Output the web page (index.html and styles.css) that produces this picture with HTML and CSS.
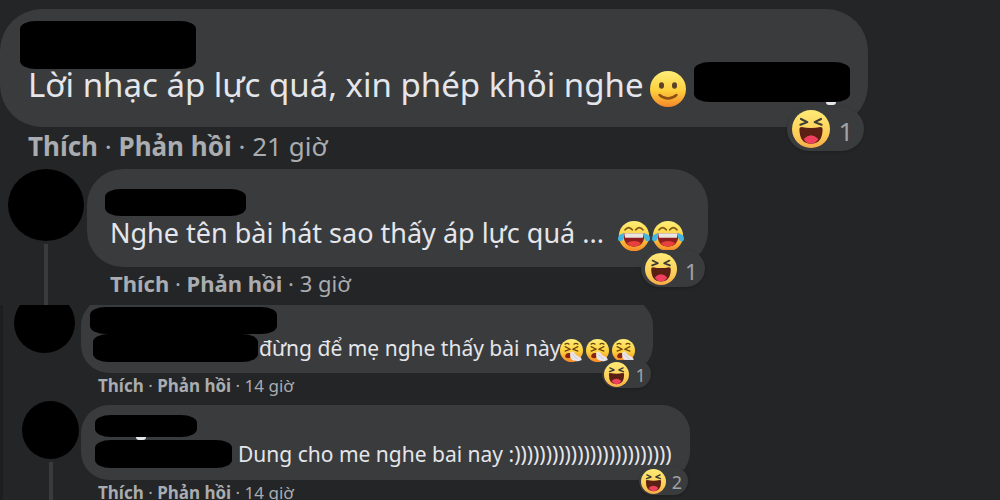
FILE: index.html
```html
<!doctype html>
<html lang="vi">
<head>
    <meta charset="UTF-8">
    <meta name="viewport" content="width=device-width, initial-scale=1.0">
    <title>Bình luận</title>
    <link rel="stylesheet" href="styles.css">
</head>
<body>
    <svg class="sprite" aria-hidden="true">
        <defs>
            <linearGradient id="face" x1="0" y1="0" x2="0" y2="1">
                <stop offset="0" stop-color="#ffee78"/>
                <stop offset="0.55" stop-color="#fdcf3c"/>
                <stop offset="1" stop-color="#f5872a"/>
            </linearGradient>
            <linearGradient id="haha-face" x1="0" y1="0" x2="0" y2="1">
                <stop offset="0" stop-color="#ffea76"/>
                <stop offset="0.7" stop-color="#fdcb55"/>
                <stop offset="1" stop-color="#f7a94a"/>
            </linearGradient>
        </defs>
        <symbol id="smile" viewBox="0 0 36 36">
            <circle cx="18" cy="18" r="18" fill="url(#face)"/>
            <ellipse cx="11.5" cy="14.5" rx="2.500" ry="3.200" fill="#5b4127"/>
            <ellipse cx="24.5" cy="14.5" rx="2.500" ry="3.200" fill="#5b4127"/>
            <path d="M9.500 24q8.500 7 17 0" fill="none" stroke="#8a4f13" stroke-width="2.400" stroke-linecap="round"/>
        </symbol>
        <symbol id="joy" viewBox="0 0 36 36">
            <circle cx="18" cy="18" r="17" fill="url(#face)"/>
            <path d="M8 11q4-5 8 0M20 11q4-5 8 0" fill="none" stroke="#7a5718" stroke-width="2" stroke-linecap="round"/>
            <path d="M6 15h24q0 15-12 15T6 15z" fill="#8f1f1f"/>
            <path d="M7 15h22l-1 5H8z" fill="#e9e6e0"/>
            <path d="M10 26q8-5 16 0-3 4-8 4t-8-4z" fill="#e8403c"/>
            <path d="M7 15q-7 1-7 6 0 3 3 3 4 0 4-9zM29 15q7 1 7 6 0 3-3 3-4 0-4-9z" fill="#45b5e0"/>
        </symbol>
        <symbol id="sneeze" viewBox="0 0 36 36">
            <circle cx="18" cy="18" r="18" fill="url(#face)"/>
            <path d="M8 12l8 4-8 3M28 12l-8 4 8 3M8 8q3-2 6 0M22 8q3-2 6 0" fill="none" stroke="#6b4310" stroke-width="2" stroke-linecap="round" stroke-linejoin="round"/>
            <path d="M8 28q0-7 8-6l1 6q-4 4-9 0z" fill="#87240f"/>
            <path d="M16 21q3-3 6 0 2 4 7 6 5 2 5 6-5 3-10 1-7 0-8-7z" fill="#e9e4ea"/>
            <path d="M19 23q3 6 9 8" fill="none" stroke="#c6bfca" stroke-width="1"/>
        </symbol>
        <symbol id="haha" viewBox="0 0 36 36">
            <circle cx="18" cy="18" r="18" fill="url(#haha-face)"/>
            <path d="M8.500 8.500l6 3-6.500 2.500M27.500 8.500l-6 3 6.500 2.500" fill="none" stroke="#3a3b35" stroke-width="2" stroke-linecap="round" stroke-linejoin="round"/>
            <path d="M7 18q0-2 2-2 9 2 18 0 2 0 2 2 0 14-11 14T7 18z" fill="#5b2014"/>
            <path d="M11 27.500q7-7 14 0-2.500 4.500-7 4.500t-7-4.500z" fill="#f0405e"/>
        </symbol>
    </svg>

    <section class="panel panel-large">
        <article class="comment">
            <div class="body">
                <div class="bubble bubble-first">
                    <span class="redacted name"></span>
                    <p class="text">Lời nhạc áp lực quá, xin phép khỏi nghe
                        <svg class="emoji" role="img" aria-label="mặt cười"><use href="#smile"/></svg>
                        <span class="redacted tag peek"></span>
                    </p>
                    <div class="reaction"><svg><use href="#haha"/></svg><span>1</span></div>
                </div>
                <div class="actions"><button>Thích</button> · <button>Phản hồi</button> · <a href="#">21 giờ</a></div>
            </div>
        </article>

        <article class="comment reply">
            <div class="side"><span class="avatar"></span><span class="line"></span></div>
            <div class="body">
                <div class="bubble">
                    <span class="redacted name"></span>
                    <p class="text">Nghe tên bài hát sao thấy áp lực quá ...
                        <span class="emojis"><svg class="emoji" role="img" aria-label="cười ra nước mắt"><use href="#joy"/></svg><svg class="emoji" role="img" aria-label="cười ra nước mắt"><use href="#joy"/></svg></span>
                    </p>
                    <div class="reaction"><svg><use href="#haha"/></svg><span>1</span></div>
                </div>
                <div class="actions"><button>Thích</button> · <button>Phản hồi</button> · <a href="#">3 giờ</a></div>
            </div>
        </article>
    </section>

    <section class="panel panel-small">
        <article class="comment clipped">
            <div class="side"><span class="avatar"></span></div>
            <div class="body">
                <div class="bubble">
                    <span class="redacted name"></span>
                    <p class="text"><span class="redacted tag"></span>đừng để mẹ nghe thấy bài này<span class="emojis"><svg class="emoji" role="img" aria-label="hắt hơi"><use href="#sneeze"/></svg><svg class="emoji" role="img" aria-label="hắt hơi"><use href="#sneeze"/></svg><svg class="emoji" role="img" aria-label="hắt hơi"><use href="#sneeze"/></svg></span></p>
                    <div class="reaction"><svg><use href="#haha"/></svg><span>1</span></div>
                </div>
                <div class="actions"><button>Thích</button> · <button>Phản hồi</button> · <a href="#">14 giờ</a></div>
            </div>
        </article>

        <article class="comment last">
            <div class="side"><span class="avatar"></span><span class="line"></span></div>
            <div class="body">
                <div class="bubble">
                    <span class="redacted name peek"></span>
                    <p class="text"><span class="redacted tag"></span>Dung cho me nghe bai nay :)))))))))))))))))))))))))</p>
                    <div class="reaction"><svg><use href="#haha"/></svg><span>2</span></div>
                </div>
                <div class="actions"><button>Thích</button> · <button>Phản hồi</button> · <a href="#">14 giờ</a></div>
            </div>
        </article>
    </section>
</body>
</html>
```

FILE: styles.css
```css
* {
    margin: 0;
    padding: 0;
    box-sizing: border-box;
}
body {
    font-family: "Noto Sans", "Open Sans", sans-serif;
    background-color: #242526;
    color: #e4e6eb;
    height: 100vh;
    overflow: hidden;
}
.sprite {
    display: block;
    width: 0;
    height: 0;
}
button {
    font: inherit;
    font-weight: bold;
    color: inherit;
    background: none;
    border: none;
    cursor: pointer;
}
a {
    color: inherit;
    text-decoration: none;
}

/* comments */
.comment {
    display: flex;
    align-items: stretch;
}
.side {
    display: flex;
    flex-direction: column;
    align-items: center;
    flex: none;
}
.avatar {
    background: #000;
    border-radius: 50%;
    flex: none;
}
.line {
    flex: 1;
    width: 4px;
    background: #3a3b3c;
    margin-top: 3px;
}
.body {
    display: flex;
    flex-direction: column;
    align-items: flex-start;
}
.bubble {
    position: relative;
    background: #3a3b3c;
}
.text {
    display: flex;
    align-items: center;
    white-space: nowrap;
}
.emojis {
    display: flex;
}
.emoji {
    flex: none;
}
.actions {
    color: #a9acb0;
    white-space: nowrap;
}
.redacted {
    display: block;
    position: relative;
    flex: none;
    background: #000;
    border-radius: 16px / 8px;
}
/* tail of a "g" left under the marker */
.peek::after {
    content: "";
    position: absolute;
    top: 100%;
    width: 10px;
    height: 3px;
    background: #e4e6eb;
    border-radius: 0 0 6px 6px;
}
.reaction {
    position: absolute;
    display: flex;
    align-items: center;
    background: #3a3b3c;
    color: #a0a3a7;
    border-radius: 24px;
    box-shadow: 0 1px 3px rgba(0, 0, 0, 0.2);
}
.reaction span {
    margin-top: 4px;
}

/* large panel */
.panel-large {
    padding-top: 9px;
}
.panel-large .bubble {
    border-radius: 42px;
    padding: 12px 18px 0 20px;
    height: 118px;
}
.panel-large .name {
    width: 176px;
    height: 48px;
}
.panel-large .text {
    font-size: 33px;
    line-height: 40px;
    padding-left: 8px;
}
.bubble-first .text {
    margin-top: -6px;
}
.bubble-first .emoji {
    width: 36px;
    height: 36px;
    margin: 8px 8px 0 6px;
}
.bubble-first .tag {
    width: 156px;
    height: 40px;
    margin-top: -6px;
}
.bubble-first .tag::after {
    right: 14px;
}
.bubble-first .reaction {
    right: 4px;
    bottom: -24px;
    width: 77px;
    height: 44px;
    padding-left: 5px;
    gap: 9px;
    font-size: 26px;
}
.bubble-first .reaction svg {
    width: 38px;
    height: 38px;
}
.panel-large .actions {
    font-size: 26px;
    line-height: 34px;
    margin: 2px 0 6px 28px;
}
.reply .side {
    width: 76px;
    margin: 0 3px 0 8px;
}
.reply .avatar {
    width: 76px;
    height: 72px;
}
.panel-large .reply .bubble {
    border-radius: 36px;
    padding: 20px 24px 0 18px;
    height: 98px;
}
.reply .name {
    width: 141px;
    height: 27px;
}
.panel-large .reply .text {
    font-size: 27px;
    line-height: 34px;
    margin-top: -3px;
    padding-left: 5px;
}
.reply .emojis {
    gap: 2px;
    margin: 7px 0 0 14px;
}
.reply .emoji {
    width: 32px;
    height: 32px;
}
.reply .reaction {
    right: 3px;
    bottom: -20px;
    width: 64px;
    height: 37px;
    padding-left: 4px;
    gap: 8px;
    font-size: 22px;
}
.reply .reaction svg {
    width: 32px;
    height: 32px;
}
.panel-large .reply .actions {
    font-size: 22px;
    line-height: 30px;
    margin: 1px 0 7px 23px;
}

/* small panel, its first comment runs under the top edge */
.panel-small {
    border-left: 3px solid #1d1e1f;
    overflow: hidden;
}
.clipped {
    margin-top: -12px;
}
.panel-small .side {
    width: 61px;
    margin: 0 6px 0 11px;
}
.panel-small .avatar {
    width: 61px;
    height: 60px;
}
.panel-small .bubble {
    border-radius: 28px;
    padding: 0 18px 0 12px;
    height: 75px;
}
.clipped .bubble {
    margin-top: 5px;
}
.clipped .name {
    width: 187px;
    height: 27px;
    margin: 9px 0 0 -3px;
}
.panel-small .text {
    font-size: 21px;
    line-height: 28px;
}
.panel-small .tag {
    height: 28px;
}
.clipped .tag {
    width: 165px;
    margin-right: 1px;
}
.clipped .emojis {
    gap: 3px;
    margin-top: 4px;
}
.panel-small .emoji {
    width: 23px;
    height: 23px;
}
.panel-small .reaction {
    right: 2px;
    bottom: -15px;
    width: 49px;
    height: 28px;
    padding-left: 2px;
    gap: 6px;
    font-size: 18px;
}
.panel-small .reaction svg {
    width: 25px;
    height: 25px;
}
.panel-small .reaction span {
    margin-top: 2px;
}
.panel-small .actions {
    font-size: 17px;
    line-height: 24px;
    margin: 1px 0 7px 17px;
}
.panel-small .last .side {
    width: 57px;
    margin: -4px 2px 0 19px;
}
.last .avatar {
    width: 57px;
    height: 58px;
}
.panel-small .last .bubble {
    padding: 10px 18px 0 14px;
}
.last .name {
    width: 102px;
    height: 22px;
    margin-bottom: 3px;
}
.last .name::after {
    left: 41px;
}
.last .tag {
    width: 137px;
    margin-right: 6px;
}
```
